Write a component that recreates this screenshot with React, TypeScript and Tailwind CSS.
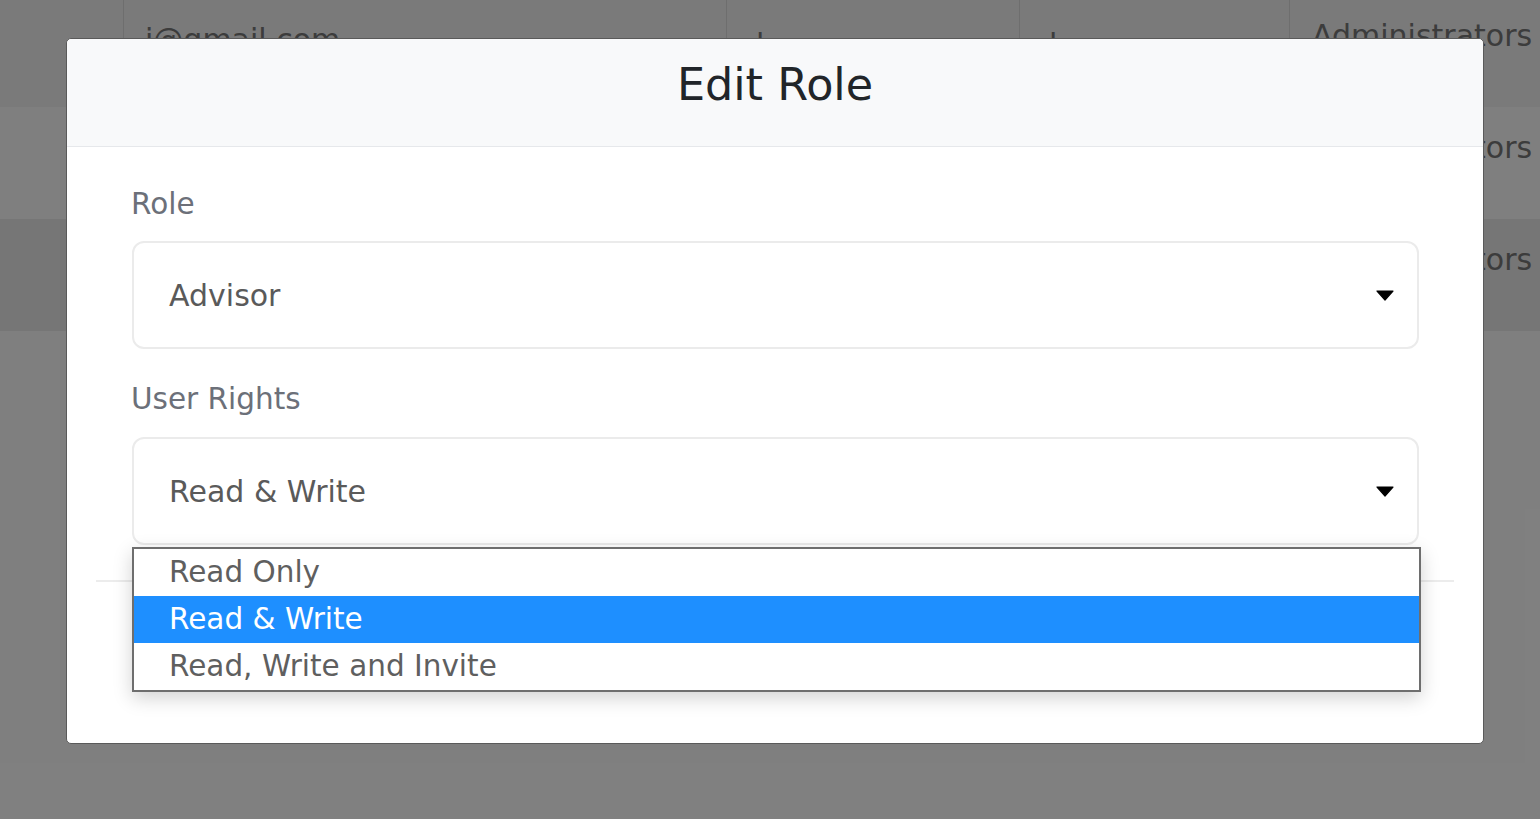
import React from "react";

const font = { fontFamily: '"DejaVu Sans", "Open Sans", sans-serif' };

function Caret() {
  return (
    <svg width="18" height="11" viewBox="0 0 18 11" className="shrink-0">
      <path d="M1 1 L17 1 L9 10 Z" fill="#000" stroke="#000" strokeWidth="1.2" strokeLinejoin="round" />
    </svg>
  );
}

function BgRow({ bg, first }: { bg: string; first?: boolean }) {
  return (
    <div className={`grid grid-cols-[124px_603px_293px_270px_1fr] h-[112px] ${bg}`}>
      <div className="border-r border-[#dcdcdc]" />
      <div className="border-r border-[#dcdcdc] pl-[21px] pt-[22px] text-[30px] text-[#787878]">
        {first ? "i@gmail.com" : ""}
      </div>
      <div className="border-r border-[#dcdcdc] pl-[29px] pt-[27px] text-[30px] text-[#787878]">{first ? "l" : ""}</div>
      <div className="border-r border-[#dcdcdc] pl-[29px] pt-[27px] text-[30px] text-[#787878]">{first ? "l" : ""}</div>
      <div className="pl-[22px] pt-[18px] text-[30px] text-[#787878] whitespace-nowrap">Administrators</div>
    </div>
  );
}

export default function App() {
  return (
    <div className="relative w-[1540px] h-[819px] overflow-hidden bg-white" style={font}>
      <div className="-mt-[5px]">
        <BgRow bg="bg-[#f4f4f4]" first />
        <BgRow bg="bg-white" />
        <BgRow bg="bg-[#ececec]" />
      </div>

      <div className="absolute inset-0 bg-black/50 pl-[66px] pt-[38px]">
        <div className="w-[1418px] h-[706px] bg-white rounded-[5px] border border-[#5a5a5a] flex flex-col">
          <div className="h-[108px] shrink-0 bg-[#f8f9fa] border-b border-[#e6e8eb] rounded-t-[5px] flex items-center justify-center">
            <div className="text-[44.5px] text-[#212529] leading-none -mt-[14px]">Edit Role</div>
          </div>

          <div className="px-[64px] flex flex-col">
            <div className="mt-[37px] h-[40px] flex items-center text-[29.5px] text-[#6c7079]">Role</div>
            <div className="mt-[17px] h-[108px] ml-[1px] border-2 border-[#ebebeb] rounded-[12px] flex items-center justify-between pl-[35px] pr-[23px]">
              <span className="text-[30px] text-[#5a5a5a]">Advisor</span>
              <Caret />
            </div>

            <div className="mt-[30px] h-[40px] flex items-center text-[29.5px] text-[#6c7079]">User Rights</div>
            <div className="relative mt-[18px]">
              <div className="h-[108px] ml-[1px] border-2 border-[#ebebeb] rounded-[12px] flex items-center justify-between pl-[35px] pr-[23px]">
                <span className="text-[30px] text-[#5a5a5a]">Read &amp; Write</span>
                <Caret />
              </div>
              <div className="absolute left-[1px] top-[110px] w-[1289px] z-10 border-2 border-[#6e6e6e] bg-white shadow-[0_6px_18px_rgba(0,0,0,0.18)] text-[29.5px]">
                <div className="h-[47px] flex items-center pl-[35px] text-[#5f5f5f]">Read Only</div>
                <div className="h-[47px] flex items-center pl-[35px] bg-[#1e8fff] text-white">Read &amp; Write</div>
                <div className="h-[47px] flex items-center pl-[35px] text-[#5f5f5f]">Read, Write and Invite</div>
              </div>
            </div>

            <div className="mt-[35px] -mx-[35px] border-t-2 border-[#ececec]" />
          </div>
        </div>
      </div>
    </div>
  );
}
